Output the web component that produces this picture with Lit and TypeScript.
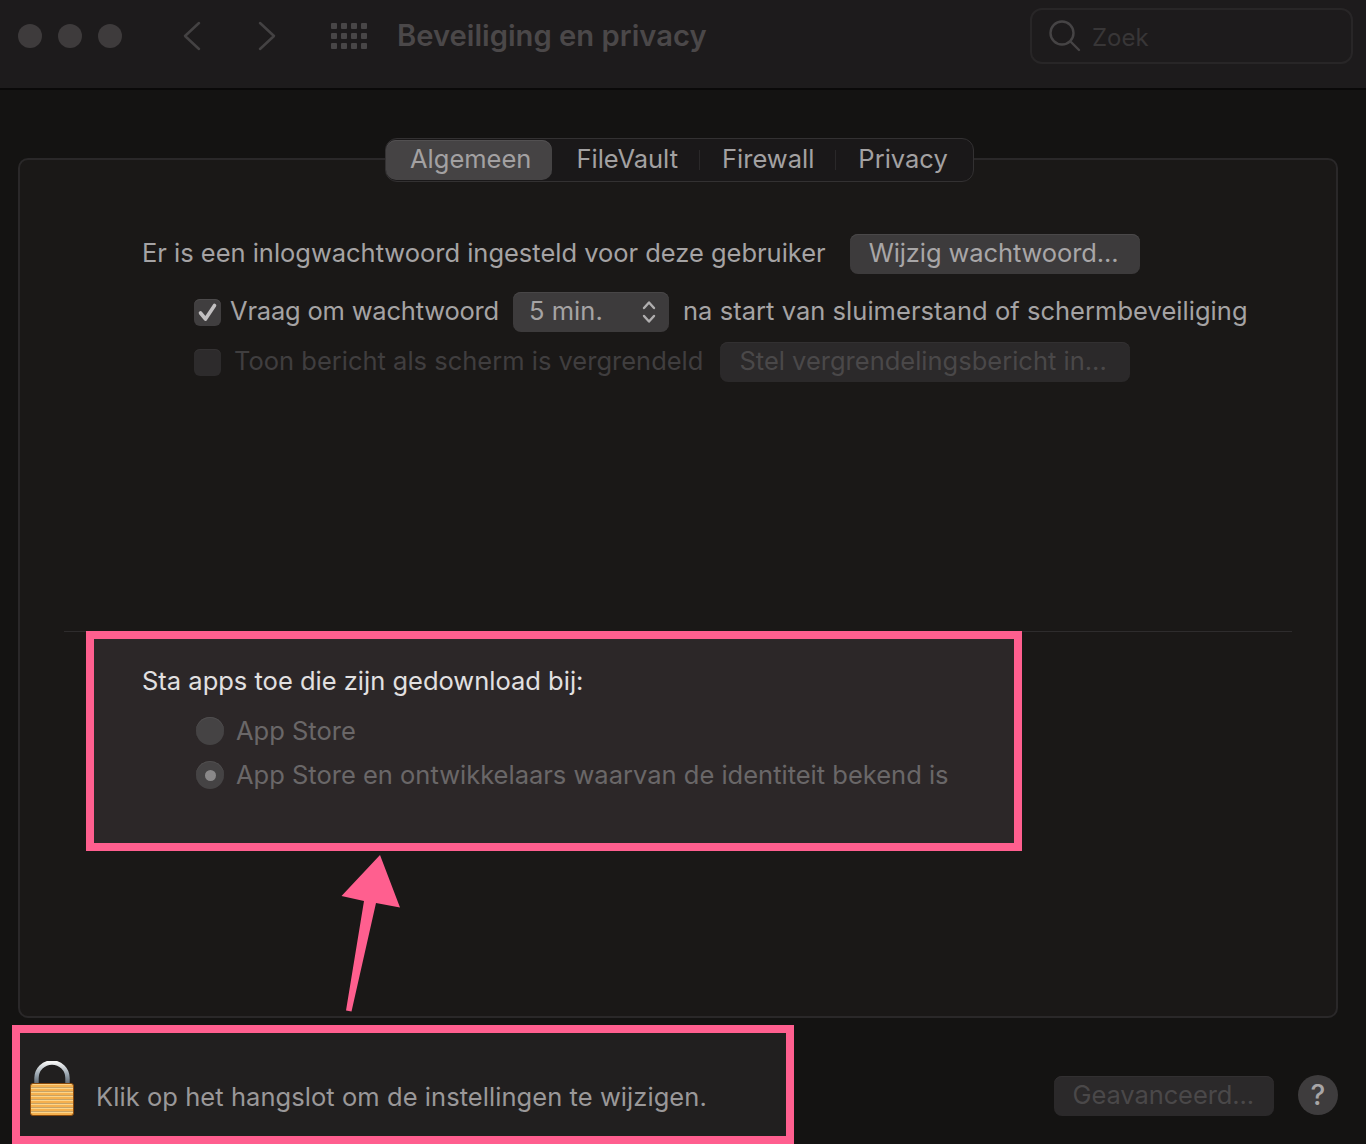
import { LitElement, html, css, svg } from "lit";
import { customElement } from "lit/decorators.js";

const gridCells = [0, 1, 2].flatMap((r) =>
  [0, 1, 2, 3].map((c) => svg`<rect x=${c * 10} y=${r * 10} width="6" height="6" rx="1"></rect>`)
);

@customElement("app-root")
export class AppRoot extends LitElement {
  static styles = css`
    :host {
      display: block;
      position: relative;
      width: 1366px;
      height: 1144px;
      overflow: hidden;
      background: #141312;
      font-family: Inter, "Liberation Sans", sans-serif;
      font-size: 25.5px;
      line-height: 32px;
      color: #a5a3a4;
    }
    .titlebar {
      display: flex;
      align-items: center;
      height: 90px;
      box-sizing: border-box;
      background: #1d1b1c;
      border-bottom: 2px solid #0a0909;
      padding: 0 0 16px 18px;
    }
    .dots { display: flex; gap: 16px; }
    .dot { width: 24px; height: 24px; border-radius: 50%; background: #3e3b3c; }
    .chev { width: 18px; height: 30px; fill: none; stroke: #444243; stroke-width: 2.5; stroke-linecap: round; stroke-linejoin: round; }
    .chev.back { margin-left: 61px; }
    .chev.fwd { margin-left: 57px; }
    .grid { width: 36px; height: 26px; margin-left: 55px; fill: #484647; }
    .title { margin-left: 30px; font-size: 29.2px; font-weight: 600; color: #4b4849; white-space: nowrap; }
    .search {
      display: flex;
      align-items: center;
      width: 323px;
      height: 56px;
      box-sizing: border-box;
      margin-left: auto;
      margin-right: 13px;
      border: 2px solid #282627;
      border-radius: 12px;
      padding-left: 16px;
      font-size: 24px;
      color: #383637;
    }
    .search svg { width: 34px; height: 34px; fill: none; stroke: #464445; stroke-width: 2.4; stroke-linecap: round; }
    .search span { margin: 4px 0 0 10px; }

    .panel {
      margin: 68px 28px 0 18px;
      height: 860px;
      box-sizing: border-box;
      border: 2px solid #2a2829;
      border-radius: 10px;
      background: #1a1817;
      display: flex;
      flex-direction: column;
    }
    .tabs {
      display: flex;
      align-items: center;
      align-self: flex-start;
      margin: -22px 0 0 365px;
      height: 44px;
      box-sizing: border-box;
      border: 1px solid #333132;
      border-radius: 12px;
      background: #1a1819;
      padding: 1px 0 1px 0;
      color: #a3a1a2;
    }
    .tab { display: flex; align-items: center; height: 100%; box-sizing: border-box; padding: 0 21px 2px 22px; }
    .tab.on { background: #454344; border-radius: 10px; padding: 0 21px 2px 24px; box-shadow: inset 0 1px 0 #525051; }
    .tab.on + .tab { padding-left: 24px; }
    .tab:last-child { padding-right: 25px; }
    .sep { width: 1px; height: 20px; background: #2a2829; }

    .row { display: flex; align-items: center; white-space: nowrap; }
    .row span { margin-bottom: 2px; }
    .r1 { margin-top: 52px; padding-left: 122px; height: 40px; letter-spacing: -0.02px; }
    .r2 { margin-top: 18px; padding-left: 174px; height: 40px; letter-spacing: 0.04px; }
    .r3 { margin-top: 10px; padding-left: 174px; height: 40px; color: #403e3f; }
    .btn {
      display: flex;
      align-items: center;
      height: 40px;
      padding: 0 20px 2px;
      box-sizing: border-box;
      border-radius: 8px;
      background: #3d3b3c;
      color: #a8a6a7;
      box-shadow: inset 0 1px 0 #4a4849;
    }
    .btn.off { background: #2b292a; color: #4a4849; box-shadow: inset 0 1px 0 #323031; }
    .r1 .btn { margin-left: 24px; padding: 0 21px 2px 19px; letter-spacing: -0.1px; }
    .r3 .btn { margin-left: 17px; padding: 0 23px 2px 19px; }
    .check {
      width: 27px;
      height: 27px;
      box-sizing: border-box;
      border-radius: 6px;
      background: #403e3f;
      display: flex;
      align-items: center;
      justify-content: center;
      box-shadow: inset 0 1px 0 #4c4a4b;
      flex: none;
    }
    .check svg { width: 21px; height: 21px; fill: none; stroke: #c2c0c1; stroke-width: 3.6; stroke-linecap: round; stroke-linejoin: round; }
    .check.off { background: #2d2b2c; box-shadow: inset 0 1px 0 #343233; }
    .r2 .check + span { margin-left: 9px; letter-spacing: -0.2px; }
    .r3 .check + span { margin-left: 13px; }
    .select {
      display: flex;
      align-items: center;
      justify-content: space-between;
      width: 156px;
      height: 40px;
      box-sizing: border-box;
      margin: 0 14px;
      padding: 0 12px 0 16px;
      border-radius: 8px;
      background: #3d3b3c;
      box-shadow: inset 0 1px 0 #484647;
    }
    .select svg { width: 16px; height: 26px; fill: none; stroke: #b0aeaf; stroke-width: 2.4; stroke-linecap: round; stroke-linejoin: round; }

    .divider { margin: 249px 44px 0 44px; height: 1px; background: #2e2c2d; flex: none; }
    .hl {
      border: 8px solid #ff5f8f;
      box-sizing: border-box;
      background: #2c2728;
    }
    .apps {
      width: 936px;
      height: 220px;
      margin: -1px 0 0 66px;
      padding: 26px 0 0 48px;
      color: #6a6768;
    }
    .apps h2 { margin: 0; font: inherit; color: #e2e0e1; }
    .radios { display: flex; flex-direction: column; gap: 12px; margin: 18px 0 0 54px; }
    .radio { display: flex; align-items: center; gap: 12px; white-space: nowrap; }
    .dotbox {
      width: 28px;
      height: 28px;
      border-radius: 50%;
      background: #454344;
      display: flex;
      align-items: center;
      justify-content: center;
      box-shadow: inset 0 1px 0 #504e4f;
    }
    .dotbox i { width: 11px; height: 11px; border-radius: 50%; background: #8a8889; }

    .footer { display: flex; align-items: flex-start; justify-content: space-between; margin-top: 7px; }
    .lockbox {
      display: flex;
      align-items: flex-start;
      width: 782px;
      height: 119px;
      margin-left: 12px;
      padding: 28px 0 0 10px;
      background: #211f1f;
      color: #9a9899;
    }
    .lockbox svg { width: 44px; height: 55px; flex: none; }
    .lockbox span { margin: 20px 0 0 22px; white-space: nowrap; letter-spacing: 0.06px; }
    .right { display: flex; align-items: center; gap: 24px; margin: 49px 28px 0 0; }
    .right .btn { margin-top: 2px; padding-left: 19px; letter-spacing: -0.1px; }
    .help {
      display: flex;
      align-items: center;
      justify-content: center;
      width: 40px;
      height: 40px;
      border-radius: 50%;
      background: #3e3c3d;
      color: #a8a6a7;
      font-size: 28px;
      font-weight: 500;
    }
    .arrow { position: absolute; left: 330px; top: 845px; width: 80px; height: 175px; fill: #ff5f8f; }
  `;

  render() {
    return html`
      <div class="titlebar">
        <div class="dots"><div class="dot"></div><div class="dot"></div><div class="dot"></div></div>
        <svg class="chev back" viewBox="0 0 18 30"><path d="M16 2 L2 15 L16 28"></path></svg>
        <svg class="chev fwd" viewBox="0 0 18 30"><path d="M2 2 L16 15 L2 28"></path></svg>
        <svg class="grid" viewBox="0 0 36 26">${gridCells}</svg>
        <div class="title">Beveiliging en privacy</div>
        <div class="search">
          <svg viewBox="0 0 34 34"><circle cx="14" cy="14" r="11.5"></circle><path d="M22.5 22.5 L31 31"></path></svg>
          <span>Zoek</span>
        </div>
      </div>
      <div class="panel">
        <div class="tabs">
          <div class="tab on">Algemeen</div>
          <div class="tab">FileVault</div>
          <div class="sep"></div>
          <div class="tab">Firewall</div>
          <div class="sep"></div>
          <div class="tab">Privacy</div>
        </div>
        <div class="row r1">
          <span>Er is een inlogwachtwoord ingesteld voor deze gebruiker</span>
          <div class="btn">Wijzig wachtwoord...</div>
        </div>
        <div class="row r2">
          <div class="check"><svg viewBox="0 0 21 21"><path d="M3.5 11 L8.5 17 L17.5 3.5"></path></svg></div>
          <span>Vraag om wachtwoord</span>
          <div class="select">
            <span>5 min.</span>
            <svg viewBox="0 0 16 26"><path d="M3 9 L8 3.5 L13 9 M3 17 L8 22.5 L13 17"></path></svg>
          </div>
          <span>na start van sluimerstand of schermbeveiliging</span>
        </div>
        <div class="row r3">
          <div class="check off"></div>
          <span>Toon bericht als scherm is vergrendeld</span>
          <div class="btn off">Stel vergrendelingsbericht in...</div>
        </div>
        <div class="divider"></div>
        <div class="hl apps">
          <h2>Sta apps toe die zijn gedownload bij:</h2>
          <div class="radios">
            <div class="radio"><div class="dotbox"></div><span>App Store</span></div>
            <div class="radio"><div class="dotbox"><i></i></div><span>App Store en ontwikkelaars waarvan de identiteit bekend is</span></div>
          </div>
        </div>
      </div>
      <div class="footer">
        <div class="hl lockbox">
          <svg viewBox="0 0 44 55">
            <defs>
              <linearGradient id="shackle" x1="0" y1="0" x2="0" y2="1">
                <stop offset="0" stop-color="#f4f4f4"></stop>
                <stop offset="0.55" stop-color="#9aa6b0"></stop>
                <stop offset="1" stop-color="#5d666e"></stop>
              </linearGradient>
              <pattern id="ribs" width="44" height="4" patternUnits="userSpaceOnUse">
                <rect width="44" height="2.4" fill="#f5b04e"></rect>
                <rect y="2.4" width="44" height="1.6" fill="#fcd48a"></rect>
              </pattern>
            </defs>
            <path d="M6.5 23 V17 a15.5 15.5 0 0 1 31 0 V23" fill="none" stroke="url(#shackle)" stroke-width="4.4"></path>
            <rect x="0.5" y="22.5" width="43" height="32" rx="2.5" fill="url(#ribs)" stroke="#8a4a0c"></rect>
          </svg>
          <span>Klik op het hangslot om de instellingen te wijzigen.</span>
        </div>
        <div class="right">
          <div class="btn off">Geavanceerd...</div>
          <div class="help">?</div>
        </div>
      </div>
      <svg class="arrow" viewBox="0 0 80 175"><path d="M50 10 L11.5 51 L34 56 L16 165.5 L21.5 166.5 L46 58 L70 62.5 Z"></path></svg>
    `;
  }
}
